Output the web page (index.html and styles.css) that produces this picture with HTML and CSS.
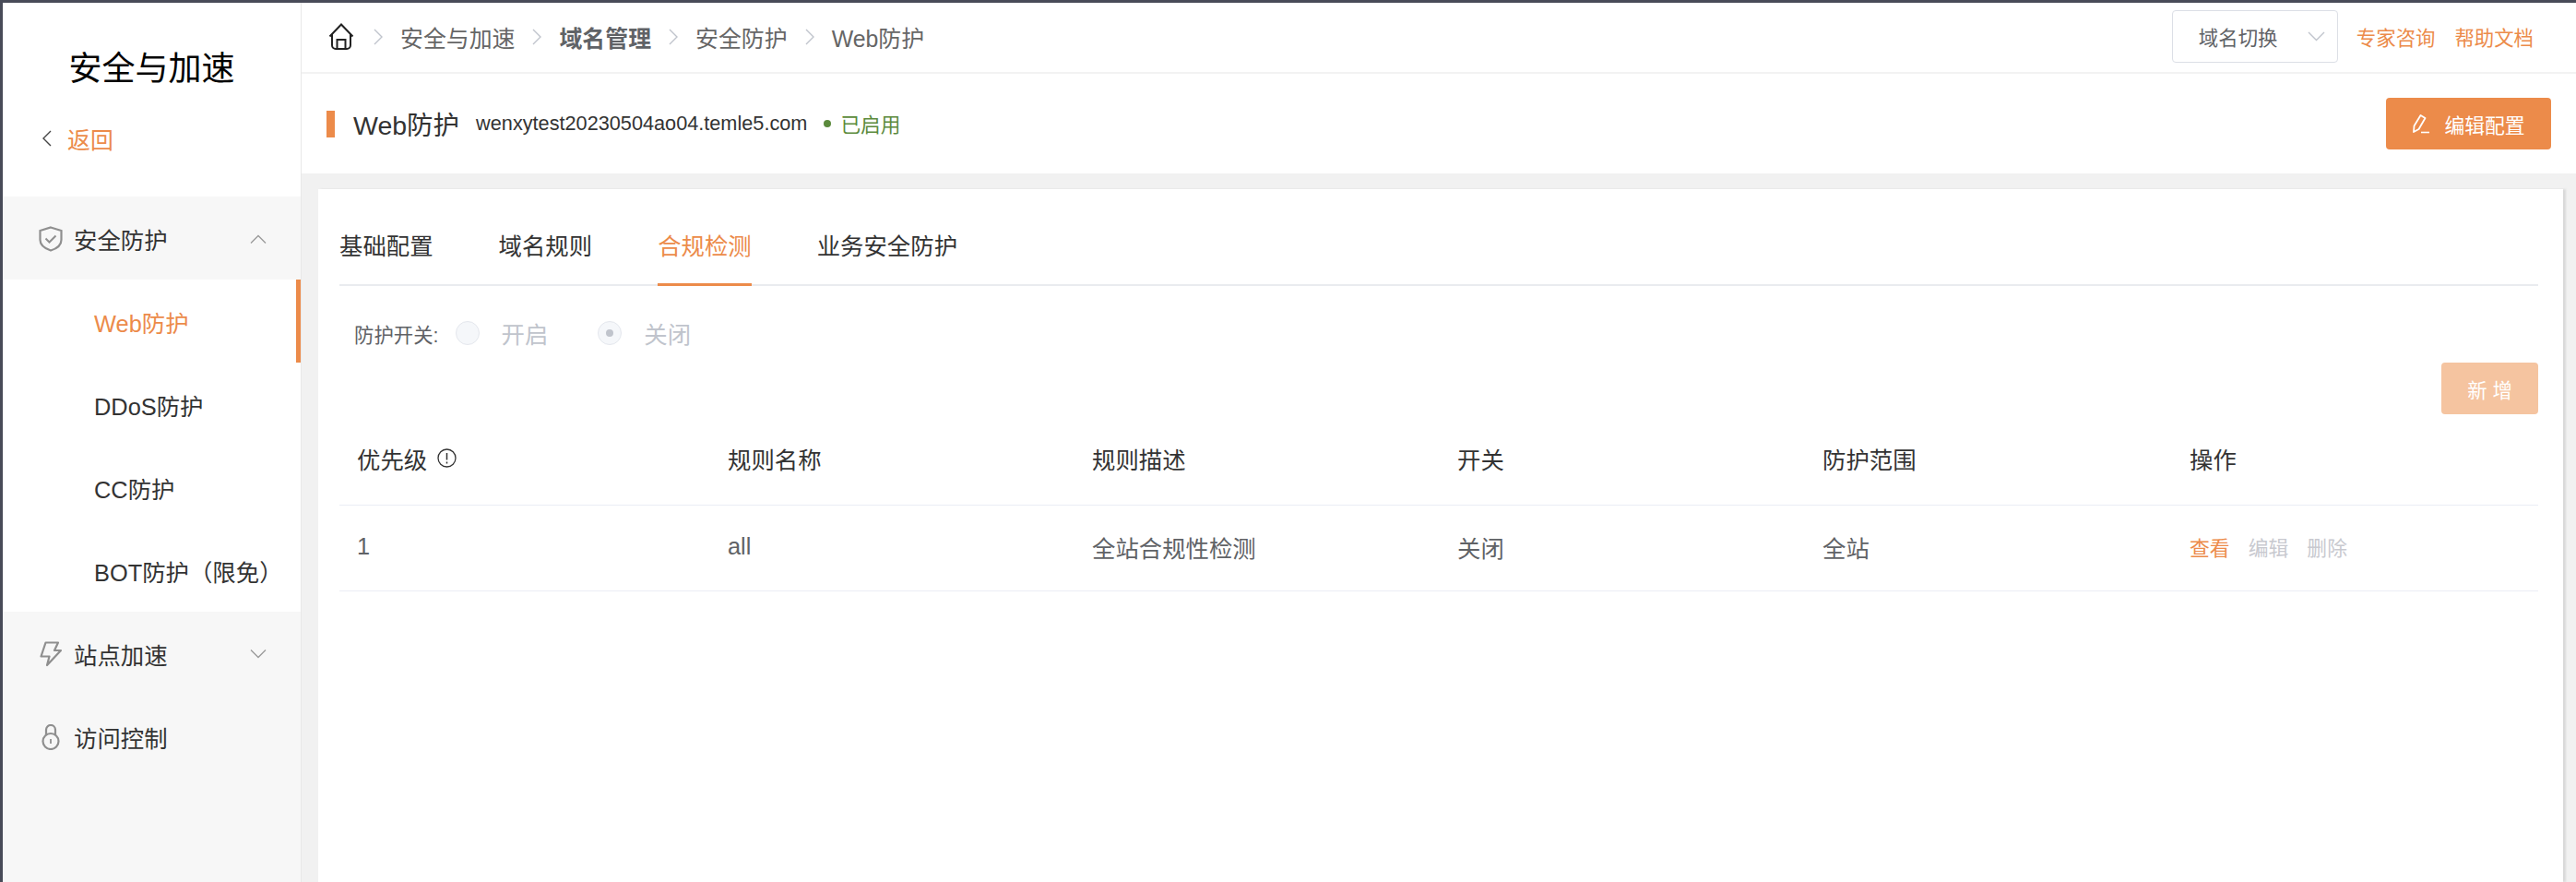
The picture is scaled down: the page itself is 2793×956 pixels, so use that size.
FILE: index.html
```html
<!DOCTYPE html>
<html lang="zh-CN">
<head>
    <meta charset="UTF-8">
    <title>Web防护 - 安全与加速</title>
    <link rel="stylesheet" href="styles.css">
</head>
<body>
    <div class="frame">
        <aside class="sidebar">
            <h1 class="side-title">安全与加速</h1>
            <a class="back" href="#">
                <svg width="11" height="18" viewBox="0 0 11 18"><path d="M10 1L2 9l8 8" fill="none" stroke="#444" stroke-width="1.4"/></svg>
                <span>返回</span>
            </a>
            <div class="menu-head">
                <span class="menu-icon">
                    <svg width="26" height="28" viewBox="0 0 26 28"><path d="M13 1.5L24.5 5v10c0 6-5 9.500-11.500 11.500C7 24.500 1.500 21 1.500 15V5z" fill="none" stroke="#8f8f8f" stroke-width="2.200"/><path d="M7.500 13.500l4 4 7-7" fill="none" stroke="#8f8f8f" stroke-width="2"/></svg>
                </span>
                <span>安全防护</span>
                <svg class="menu-arrow" width="18" height="10" viewBox="0 0 18 10"><path d="M1 9.500l8-8 8 8" fill="none" stroke="#9a9a9a" stroke-width="1.300"/></svg>
            </div>
            <ul class="submenu">
                <li class="active">Web防护</li>
                <li>DDoS防护</li>
                <li>CC防护</li>
                <li>BOT防护（限免）</li>
            </ul>
            <div class="menu-head">
                <span class="menu-icon">
                    <svg width="24" height="28" viewBox="0 0 24 28"><path d="M6.500 1.500H20l-4 8.500h7L8 26l2.500-9.500h-9z" fill="none" stroke="#8f8f8f" stroke-width="2.200" stroke-linejoin="round"/></svg>
                </span>
                <span>站点加速</span>
                <svg class="menu-arrow" width="18" height="10" viewBox="0 0 18 10"><path d="M1 .5l8 8 8-8" fill="none" stroke="#9a9a9a" stroke-width="1.300"/></svg>
            </div>
            <div class="menu-head">
                <span class="menu-icon">
                    <svg width="20" height="28" viewBox="0 0 20 28"><circle cx="10" cy="18.500" r="8.500" fill="none" stroke="#8f8f8f" stroke-width="2.200"/><path d="M5 11.500V6a5 5 0 0 1 10 0v5.500" fill="none" stroke="#8f8f8f" stroke-width="2.200"/><path d="M10 16v5" stroke="#8f8f8f" stroke-width="1.800"/></svg>
                </span>
                <span>访问控制</span>
            </div>
        </aside>

        <main class="main">
            <div class="topbar">
                <nav class="crumbs">
                    <svg class="home" width="28" height="29" viewBox="0 0 28 29"><path d="M1.500 14.500L14 1.500l12.500 13M4 12v12a4 4 0 0 0 4 4h12a4 4 0 0 0 4-4V12M9.500 28V18h9v10" fill="none" stroke="#222" stroke-width="2"/></svg>
                    <svg class="crumb-sep" width="10" height="18" viewBox="0 0 10 18"><path d="M1 1l8 8-8 8" fill="none" stroke="#c0c4cc" stroke-width="1.400"/></svg>
                    <span>安全与加速</span>
                    <svg class="crumb-sep" width="10" height="18" viewBox="0 0 10 18"><path d="M1 1l8 8-8 8" fill="none" stroke="#c0c4cc" stroke-width="1.400"/></svg>
                    <b>域名管理</b>
                    <svg class="crumb-sep" width="10" height="18" viewBox="0 0 10 18"><path d="M1 1l8 8-8 8" fill="none" stroke="#c0c4cc" stroke-width="1.400"/></svg>
                    <span>安全防护</span>
                    <svg class="crumb-sep" width="10" height="18" viewBox="0 0 10 18"><path d="M1 1l8 8-8 8" fill="none" stroke="#c0c4cc" stroke-width="1.400"/></svg>
                    <span>Web防护</span>
                </nav>
                <div class="top-right">
                    <div class="domain-select">
                        <span>域名切换</span>
                        <svg width="19" height="11" viewBox="0 0 19 11"><path d="M1 1l8.500 8.500L18 1" fill="none" stroke="#c0c4cc" stroke-width="1.400"/></svg>
                    </div>
                    <a class="top-link" href="#">专家咨询</a>
                    <a class="top-link" href="#">帮助文档</a>
                </div>
            </div>

            <div class="page-head">
                <span class="head-bar"></span>
                <span class="head-title">Web防护</span>
                <span class="head-domain">wenxytest20230504ao04.temle5.com</span>
                <span class="head-dot"></span>
                <span class="head-status">已启用</span>
                <button class="btn-edit">
                    <svg width="20" height="24" viewBox="0 0 20 24"><path d="M2 21l.5-6.500L9.500 3l5 3L7.500 18z" fill="none" stroke="#fff" stroke-width="1.800" stroke-linejoin="round"/><path d="M10 21.500h9" stroke="#fff" stroke-width="1.600"/></svg>
                    <span>编辑配置</span>
                </button>
            </div>

            <div class="content">
                <section class="card">
                    <div class="tabs">
                        <div class="tab">基础配置</div>
                        <div class="tab">域名规则</div>
                        <div class="tab active">合规检测</div>
                        <div class="tab">业务安全防护</div>
                    </div>

                    <div class="switch-row">
                        <span class="switch-label">防护开关:</span>
                        <span class="radio"></span>
                        <span class="radio-text">开启</span>
                        <span class="radio checked"></span>
                        <span class="radio-text">关闭</span>
                    </div>

                    <div class="toolbar">
                        <button class="btn-add">新 增</button>
                    </div>

                    <table class="rules">
                        <colgroup>
                            <col class="col-a"><col class="col-b"><col class="col-c"><col class="col-c"><col class="col-d"><col>
                        </colgroup>
                        <thead>
                            <tr>
                                <th>
                                    <span class="th-inner">优先级
                                        <svg width="21" height="21" viewBox="0 0 21 21"><circle cx="10.500" cy="10.500" r="9.500" fill="none" stroke="#333" stroke-width="1.300"/><path d="M10.500 5v7.500M10.500 14.500v2" stroke="#333" stroke-width="1.500"/></svg>
                                    </span>
                                </th>
                                <th>规则名称</th>
                                <th>规则描述</th>
                                <th>开关</th>
                                <th>防护范围</th>
                                <th>操作</th>
                            </tr>
                        </thead>
                        <tbody>
                            <tr>
                                <td>1</td>
                                <td>all</td>
                                <td>全站合规性检测</td>
                                <td>关闭</td>
                                <td>全站</td>
                                <td class="actions">
                                    <a class="link" href="#">查看</a>
                                    <a class="link off" href="#">编辑</a>
                                    <a class="link off" href="#">删除</a>
                                </td>
                            </tr>
                        </tbody>
                    </table>
                </section>
            </div>
        </main>
    </div>
</body>
</html>
```

FILE: styles.css
```css
* {
    box-sizing: border-box;
}
html, body {
    height: 100%;
}
body {
    margin: 0;
    overflow: hidden;
    font-family: "Liberation Sans", "Noto Sans CJK SC", sans-serif;
    font-size: 25.4px;
    color: #333;
    background-color: #fff;
}
a {
    text-decoration: none;
}
.frame {
    display: flex;
    height: 100%;
    border-top: 3px solid #484b58;
    border-left: 3px solid #484b58;
}

/* sidebar */
.sidebar {
    flex: 0 0 324px;
    display: flex;
    flex-direction: column;
    background-color: #f7f7f7;
    border-right: 1px solid #e8e8e8;
}
.side-title {
    margin: 0;
    padding: 47px 0 0;
    background-color: #fff;
    font-size: 36px;
    font-weight: normal;
    line-height: 50px;
    text-align: center;
    color: #000;
}
.back {
    display: flex;
    align-items: center;
    gap: 17px;
    height: 113px;
    padding: 0 0 13px 42px;
    background-color: #fff;
    font-size: 24.9px;
    color: #ec8b4a;
}
.menu-head {
    display: flex;
    align-items: center;
    height: 90px;
    padding: 2px 0 0 37px;
    color: #333;
}
.menu-icon {
    display: flex;
    justify-content: center;
    width: 30px;
    margin-right: 10px;
}
.menu-arrow {
    margin-left: auto;
    margin-right: 37px;
}
.submenu {
    margin: 0;
    padding: 0;
    list-style: none;
    background-color: #fff;
}
.submenu li {
    height: 90px;
    padding-left: 99px;
    line-height: 97px;
    white-space: nowrap;
}
.submenu li.active {
    color: #ec8b4a;
    border-right: 5px solid #ec8b4a;
}

/* main */
.main {
    flex: 1;
    display: flex;
    flex-direction: column;
    min-width: 0;
    background-color: #f1f1f1;
}
.topbar {
    flex: 0 0 77px;
    display: flex;
    align-items: center;
    justify-content: space-between;
    padding: 0 46px 2px 29px;
    background-color: #fff;
    border-bottom: 2px solid #f2f2f2;
}
.crumbs {
    display: flex;
    align-items: center;
    gap: 19px;
    font-size: 24.9px;
    color: #666;
}
.crumbs b {
    color: #606266;
}
.home {
    margin-right: 2px;
}
.top-right {
    display: flex;
    align-items: center;
    gap: 21px;
    font-size: 21.4px;
}
.domain-select {
    display: flex;
    align-items: center;
    justify-content: space-between;
    width: 180px;
    height: 57px;
    margin-right: -1px;
    padding: 0 13px 0 28px;
    border: 1px solid #dcdfe6;
    border-radius: 4px;
    color: #606266;
}
.top-link {
    color: #ec8b4a;
}

.page-head {
    flex: 0 0 108px;
    display: flex;
    align-items: center;
    padding: 0 27px;
    background-color: #fff;
}
.head-bar {
    width: 9px;
    height: 29px;
    margin-right: 20px;
    background-color: #ec8b4a;
}
.head-title {
    margin-right: 18px;
    padding-bottom: 2px;
    font-size: 28.5px;
}
.head-domain {
    margin-right: 18px;
    font-size: 21.7px;
}
.head-dot {
    width: 8px;
    height: 8px;
    margin-right: 10px;
    border-radius: 50%;
    background-color: #5b8a3c;
}
.head-status {
    padding-bottom: 2px;
    font-size: 21.7px;
    color: #5b8a3c;
}
.btn-edit {
    display: flex;
    align-items: center;
    justify-content: center;
    gap: 15px;
    width: 179px;
    height: 56px;
    margin-left: auto;
    border: 0;
    border-radius: 4px;
    background-color: #ec8b4a;
    color: #fff;
    font: inherit;
    font-size: 21.8px;
}

.content {
    flex: 1;
    display: flex;
    padding: 17px 14px 0 18px;
}
.card {
    flex: 1;
    padding: 17px 27px 0 23px;
    background-color: #fff;
    box-shadow: 3px 0 2px #d9d9d9;
}

/* tabs */
.tabs {
    display: flex;
    gap: 71px;
    height: 88px;
    border-bottom: 2px solid #e9ebef;
}
.tab {
    height: 88px;
    margin-bottom: -2px;
    padding-top: 3px;
    line-height: 84px;
    border-bottom: 3px solid transparent;
}
.tab.active {
    color: #ec8b4a;
    border-bottom-color: #ec8b4a;
}

/* radios */
.switch-row {
    display: flex;
    align-items: center;
    height: 30px;
    margin-top: 36px;
    padding-left: 16px;
}
.switch-label {
    margin-right: 18px;
    font-size: 21.4px;
    color: #606266;
}
.radio {
    position: relative;
    width: 26px;
    height: 26px;
    margin-right: 24px;
    border: 1px solid #e4e7ed;
    border-radius: 50%;
    background-color: #f5f7fa;
}
.radio.checked::after {
    content: "";
    position: absolute;
    left: 8px;
    top: 8px;
    width: 8px;
    height: 8px;
    border-radius: 50%;
    background-color: #c0c4cc;
}
.radio-text {
    margin-right: 54px;
    color: #c0c4cc;
}

.toolbar {
    display: flex;
    justify-content: flex-end;
    margin-top: 17px;
}
.btn-add {
    width: 105px;
    height: 56px;
    border: 0;
    border-radius: 4px;
    background-color: #f5c4a0;
    color: #fff;
    font: inherit;
    font-size: 21.4px;
}

/* table */
.rules {
    width: 100%;
    table-layout: fixed;
    border-collapse: collapse;
}
.col-a {
    width: 402px;
}
.col-b {
    width: 395px;
}
.col-c {
    width: 396px;
}
.col-d {
    width: 398px;
}
.rules th, .rules td {
    padding: 0 0 2px 19px;
    border-bottom: 1px solid #ebeef5;
    text-align: left;
    font-weight: normal;
    white-space: nowrap;
}
.rules th {
    height: 98px;
    color: #333;
}
.rules td {
    height: 93px;
    color: #606266;
}
.th-inner {
    display: flex;
    align-items: center;
    gap: 11px;
}
.actions {
    font-size: 21.8px;
}
.link {
    margin-right: 14px;
    color: #ec8b4a;
}
.link.off {
    color: #c8c9cf;
}
```
